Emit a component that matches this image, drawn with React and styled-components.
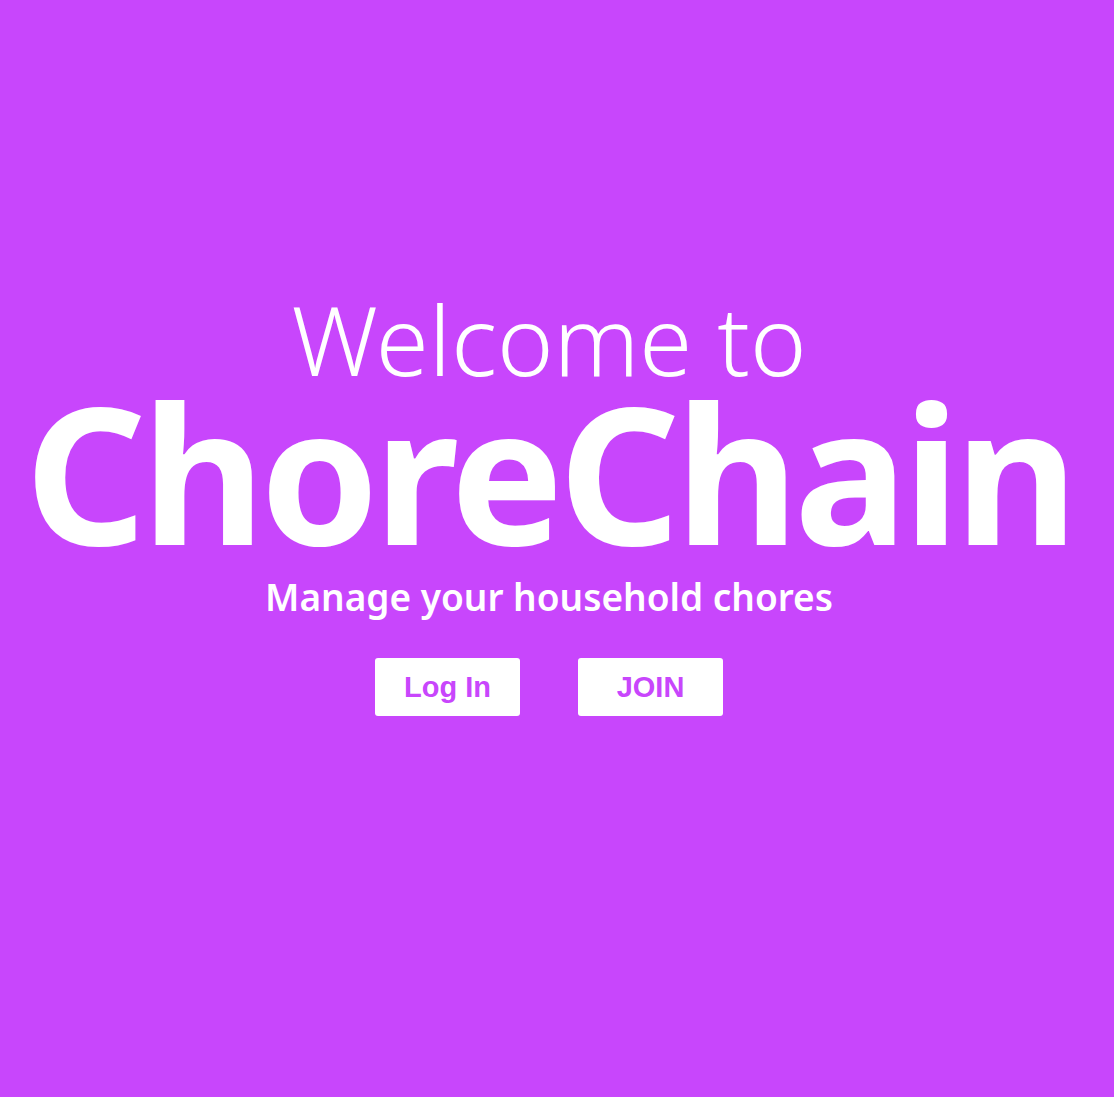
import React from "react";
import styled, { createGlobalStyle } from "styled-components";

const GlobalStyle = createGlobalStyle`
  html, body {
    margin: 0;
    padding: 0;
    background-color: #c846fc;
  }
  * {
    box-sizing: border-box;
  }
`;

const App = () => {
  return (
    <StyledPage>
      <GlobalStyle />
      <StyledHero>
        <StyledWelcome>Welcome to</StyledWelcome>
        <StyledTitle>ChoreChain</StyledTitle>
        <StyledTagline>Manage your household chores</StyledTagline>

        <StyledButtonRow>
          <StyledButton type="button">Log In</StyledButton>
          <StyledButton type="button">JOIN</StyledButton>
        </StyledButtonRow>
      </StyledHero>
    </StyledPage>
  );
};

export default App;

// ========= Start styled-components ==========
const StyledPage = styled.div`
  width: 100%;
  min-height: 100vh;
  background-color: #c846fc;
  display: flex;
  justify-content: center;
  padding: 284px 16px 0 0;
`;
const StyledHero = styled.div`
  display: flex;
  flex-direction: column;
  align-items: center;
  color: #ffffff;
  font-family: "Noto Sans", "Open Sans", sans-serif;
`;
const StyledWelcome = styled.h2`
  margin: 0;
  font-size: 96px;
  font-weight: 300;
  line-height: 110px;
`;
const StyledTitle = styled.h1`
  margin: 0;
  font-size: 190px;
  font-weight: 700;
  line-height: 155px;
  letter-spacing: -5px;
`;
const StyledTagline = styled.p`
  margin: 22px 0 0;
  font-size: 37px;
  font-weight: 600;
  line-height: 52px;
`;
const StyledButtonRow = styled.div`
  display: flex;
  gap: 58px;
  margin-top: 35px;
`;
const StyledButton = styled.button`
  width: 145px;
  height: 58px;
  border: none;
  border-radius: 3px;
  background-color: #ffffff;
  color: #c846fc;
  font-family: "Liberation Sans", Arial, sans-serif;
  font-weight: 700;
  font-size: 29px;
  cursor: pointer;
`;
// ========= End styled-components ==========
